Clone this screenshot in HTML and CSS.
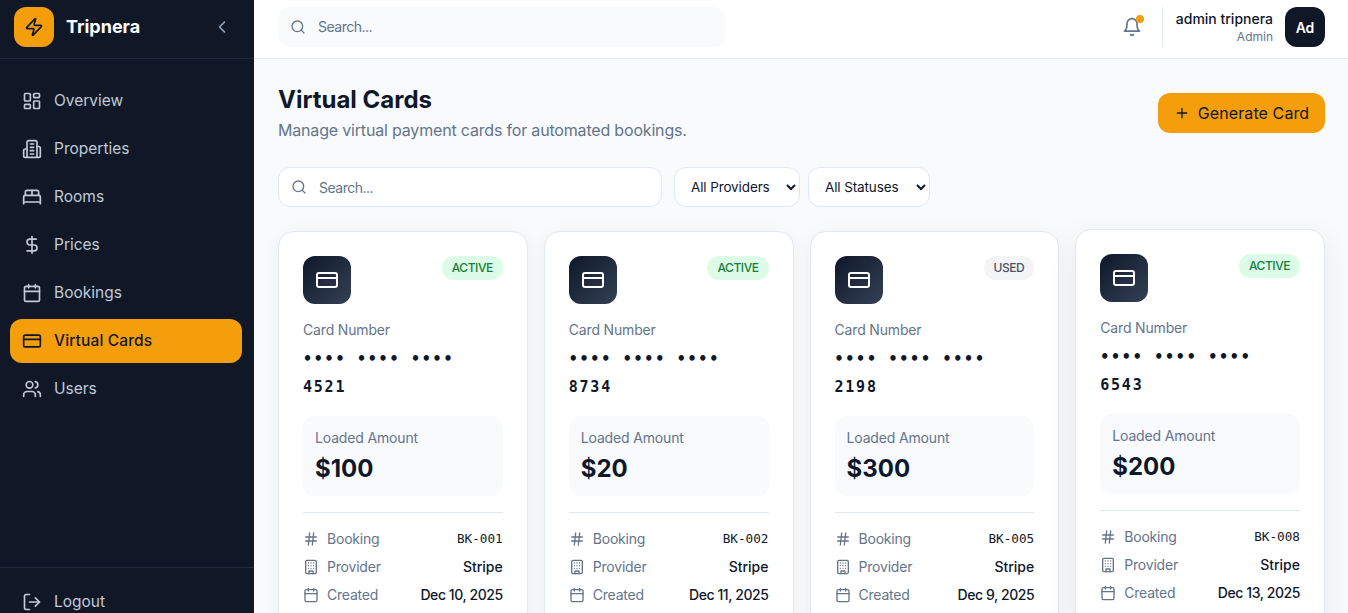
FILE: index.html
```html
<!DOCTYPE html>
<html lang="en">
<head>
<meta charset="utf-8">
<title>Virtual Cards</title>
<link rel="stylesheet" href="styles.css">
</head>
<body>
<svg class="sprite" aria-hidden="true">
  <defs>
    <symbol id="i-zap" viewBox="0 0 24 24"><path d="M4 14a1 1 0 0 1-.78-1.63l9.9-10.2a.5.5 0 0 1 .86.46l-1.92 6.02A1 1 0 0 0 13 10h7a1 1 0 0 1 .78 1.63l-9.9 10.2a.5.5 0 0 1-.86-.46l1.92-6.02A1 1 0 0 0 11 14z"/></symbol>
    <symbol id="i-left" viewBox="0 0 24 24"><path d="m15 18-6-6 6-6"/></symbol>
    <symbol id="i-dash" viewBox="0 0 24 24"><rect x="3" y="3" width="7" height="9" rx="1"/><rect x="14" y="3" width="7" height="5" rx="1"/><rect x="14" y="12" width="7" height="9" rx="1"/><rect x="3" y="16" width="7" height="5" rx="1"/></symbol>
    <symbol id="i-b2" viewBox="0 0 24 24"><path d="M6 22V4a2 2 0 0 1 2-2h8a2 2 0 0 1 2 2v18Z"/><path d="M6 12H4a2 2 0 0 0-2 2v6a2 2 0 0 0 2 2h2"/><path d="M18 9h2a2 2 0 0 1 2 2v9a2 2 0 0 1-2 2h-2"/><path d="M10 6h4M10 10h4M10 14h4M10 18h4"/></symbol>
    <symbol id="i-bed" viewBox="0 0 24 24"><path d="M2 20v-8a2 2 0 0 1 2-2h16a2 2 0 0 1 2 2v8"/><path d="M4 10V6a2 2 0 0 1 2-2h12a2 2 0 0 1 2 2v4"/><path d="M12 4v6"/><path d="M2 18h20"/></symbol>
    <symbol id="i-dollar" viewBox="0 0 24 24"><path d="M12 2v20"/><path d="M17 5H9.5a3.5 3.5 0 0 0 0 7h5a3.5 3.5 0 0 1 0 7H6"/></symbol>
    <symbol id="i-cal" viewBox="0 0 24 24"><path d="M8 2v4M16 2v4"/><rect x="3" y="4" width="18" height="18" rx="2"/><path d="M3 10h18"/></symbol>
    <symbol id="i-card" viewBox="0 0 24 24"><rect x="2" y="5" width="20" height="14" rx="2"/><path d="M2 10h20"/></symbol>
    <symbol id="i-users" viewBox="0 0 24 24"><path d="M16 21v-2a4 4 0 0 0-4-4H6a4 4 0 0 0-4 4v2"/><circle cx="9" cy="7" r="4"/><path d="M22 21v-2a4 4 0 0 0-3-3.87"/><path d="M16 3.13a4 4 0 0 1 0 7.75"/></symbol>
    <symbol id="i-logout" viewBox="0 0 24 24"><path d="M9 21H5a2 2 0 0 1-2-2V5a2 2 0 0 1 2-2h4"/><path d="m16 17 5-5-5-5"/><path d="M21 12H9"/></symbol>
    <symbol id="i-search" viewBox="0 0 24 24"><circle cx="11" cy="11" r="8"/><path d="m21 21-4.3-4.3"/></symbol>
    <symbol id="i-bell" viewBox="0 0 24 24"><path d="M6 8a6 6 0 0 1 12 0c0 7 3 9 3 9H3s3-2 3-9"/><path d="M10.3 21a1.94 1.94 0 0 0 3.4 0"/></symbol>
    <symbol id="i-plus" viewBox="0 0 24 24"><path d="M5 12h14M12 5v14"/></symbol>
    <symbol id="i-hash" viewBox="0 0 24 24"><path d="M4 9h16M4 15h16M10 3 8 21M16 3l-2 18"/></symbol>
    <symbol id="i-building" viewBox="0 0 24 24"><rect x="4" y="2" width="16" height="20" rx="2"/><path d="M9 22v-4h6v4"/><path d="M8 6h.01M16 6h.01M12 6h.01M12 10h.01M12 14h.01M16 10h.01M16 14h.01M8 10h.01M8 14h.01"/></symbol>
  </defs>
</svg>
<div class="app">
  <aside class="sidebar">
    <div class="brand">
      <span class="logo"><svg class="icon i20"><use href="#i-zap"/></svg></span>
      <span class="brand-name">Tripnera</span>
      <svg class="icon i20 collapse"><use href="#i-left"/></svg>
    </div>
    <nav class="nav">
      <a class="nav-item"><svg class="icon i20"><use href="#i-dash"/></svg>Overview</a>
      <a class="nav-item"><svg class="icon i20"><use href="#i-b2"/></svg>Properties</a>
      <a class="nav-item"><svg class="icon i20"><use href="#i-bed"/></svg>Rooms</a>
      <a class="nav-item"><svg class="icon i20"><use href="#i-dollar"/></svg>Prices</a>
      <a class="nav-item"><svg class="icon i20"><use href="#i-cal"/></svg>Bookings</a>
      <a class="nav-item active"><svg class="icon i20"><use href="#i-card"/></svg>Virtual Cards</a>
      <a class="nav-item"><svg class="icon i20"><use href="#i-users"/></svg>Users</a>
    </nav>
    <div class="side-foot">
      <a class="nav-item"><svg class="icon i20"><use href="#i-logout"/></svg>Logout</a>
    </div>
  </aside>
  <div class="main">
    <header class="topbar">
      <div class="top-search"><svg class="icon i16"><use href="#i-search"/></svg><span>Search...</span></div>
      <div class="top-right">
        <span class="bell"><svg class="icon i20"><use href="#i-bell"/></svg><span class="bell-dot"></span></span>
        <span class="top-divider"></span>
        <div class="user"><div class="user-name">admin tripnera</div><div class="user-role">Admin</div></div>
        <span class="avatar">Ad</span>
      </div>
    </header>
    <main class="content">
      <div class="page-head">
        <div>
          <h1 class="title">Virtual Cards</h1>
          <p class="subtitle">Manage virtual payment cards for automated bookings.</p>
        </div>
        <button class="primary"><svg class="icon i16"><use href="#i-plus"/></svg>Generate Card</button>
      </div>
      <div class="filters">
        <div class="filter-search"><svg class="icon i16"><use href="#i-search"/></svg><span>Search...</span></div>
        <select class="select providers"><option>All Providers</option></select>
        <select class="select statuses"><option>All Statuses</option></select>
      </div>
      <div class="grid">
        <article class="card">
          <div class="card-top"><span class="card-icon"><svg class="icon i24"><use href="#i-card"/></svg></span><span class="badge active-b">ACTIVE</span></div>
          <div class="label">Card Number</div>
          <div class="number">•••• •••• •••• 4521</div>
          <div class="amount"><div class="label">Loaded Amount</div><div class="value">$100</div></div>
          <div class="rows">
            <div class="row"><span class="key"><svg class="icon i16"><use href="#i-hash"/></svg>Booking</span><span class="code">BK-001</span></div>
            <div class="row"><span class="key"><svg class="icon i16"><use href="#i-building"/></svg>Provider</span><span class="val">Stripe</span></div>
            <div class="row"><span class="key"><svg class="icon i16"><use href="#i-cal"/></svg>Created</span><span class="val date">Dec 10, 2025</span></div>
          </div>
        </article>
        <article class="card">
          <div class="card-top"><span class="card-icon"><svg class="icon i24"><use href="#i-card"/></svg></span><span class="badge active-b">ACTIVE</span></div>
          <div class="label">Card Number</div>
          <div class="number">•••• •••• •••• 8734</div>
          <div class="amount"><div class="label">Loaded Amount</div><div class="value">$20</div></div>
          <div class="rows">
            <div class="row"><span class="key"><svg class="icon i16"><use href="#i-hash"/></svg>Booking</span><span class="code">BK-002</span></div>
            <div class="row"><span class="key"><svg class="icon i16"><use href="#i-building"/></svg>Provider</span><span class="val">Stripe</span></div>
            <div class="row"><span class="key"><svg class="icon i16"><use href="#i-cal"/></svg>Created</span><span class="val date">Dec 11, 2025</span></div>
          </div>
        </article>
        <article class="card">
          <div class="card-top"><span class="card-icon"><svg class="icon i24"><use href="#i-card"/></svg></span><span class="badge used-b">USED</span></div>
          <div class="label">Card Number</div>
          <div class="number">•••• •••• •••• 2198</div>
          <div class="amount"><div class="label">Loaded Amount</div><div class="value">$300</div></div>
          <div class="rows">
            <div class="row"><span class="key"><svg class="icon i16"><use href="#i-hash"/></svg>Booking</span><span class="code">BK-005</span></div>
            <div class="row"><span class="key"><svg class="icon i16"><use href="#i-building"/></svg>Provider</span><span class="val">Stripe</span></div>
            <div class="row"><span class="key"><svg class="icon i16"><use href="#i-cal"/></svg>Created</span><span class="val date">Dec 9, 2025</span></div>
          </div>
        </article>
        <article class="card lifted">
          <div class="card-top"><span class="card-icon"><svg class="icon i24"><use href="#i-card"/></svg></span><span class="badge active-b">ACTIVE</span></div>
          <div class="label">Card Number</div>
          <div class="number">•••• •••• •••• 6543</div>
          <div class="amount"><div class="label">Loaded Amount</div><div class="value">$200</div></div>
          <div class="rows">
            <div class="row"><span class="key"><svg class="icon i16"><use href="#i-hash"/></svg>Booking</span><span class="code">BK-008</span></div>
            <div class="row"><span class="key"><svg class="icon i16"><use href="#i-building"/></svg>Provider</span><span class="val">Stripe</span></div>
            <div class="row"><span class="key"><svg class="icon i16"><use href="#i-cal"/></svg>Created</span><span class="val date">Dec 13, 2025</span></div>
          </div>
        </article>
      </div>
    </main>
  </div>
</div>
</body>
</html>
```
FILE: styles.css
```css
* { box-sizing: border-box; }
html, body { margin: 0; height: 100%; overflow: hidden; }
body { font-family: Inter, "Noto Sans", sans-serif; font-size: 14px; color: #0f172a; background: #f8fafc; }
.sprite { display: none; }
.icon { fill: none; stroke: currentColor; stroke-width: 2; stroke-linecap: round; stroke-linejoin: round; flex: none; display: block; }
.i16 { width: 16px; height: 16px; }
.i20 { width: 20px; height: 20px; }
.i24 { width: 24px; height: 24px; }

.app { display: flex; height: 100vh; overflow: hidden; }
.sidebar { width: 254px; flex: none; background: #101828; color: #c0cad8; display: flex; flex-direction: column; overflow: hidden; }
.brand { height: 59px; flex: none; display: flex; align-items: center; padding: 0 22px 5px 14px; border-bottom: 1px solid #1e293b; gap: 12px; }
.logo { width: 40px; height: 40px; border-radius: 12px; background: #f59e0b; color: #0f172a; display: flex; align-items: center; justify-content: center; }
.brand-name { flex: 1; font-size: 18px; font-weight: 700; color: #fff; }
.collapse { color: #94a3b8; }
.nav { height: 508px; flex: none; padding: 20px 12px 0 10px; display: flex; flex-direction: column; gap: 4px; }
.nav-item { height: 44px; flex: none; display: flex; align-items: center; gap: 12px; padding: 0 12px 1px; border-radius: 12px; font-size: 15.5px; color: #c0cad8; }
.nav-item .icon { margin-top: 1px; }
.nav-item.active { background: #f59e0b; color: #0f172a; font-weight: 500; letter-spacing: .15px; }
.side-foot { border-top: 1px solid #1e293b; padding: 12px 12px 0 10px; }

.main { flex: 1; min-width: 0; display: flex; flex-direction: column; overflow: hidden; }
.topbar { height: 59px; flex: none; background: #fff; border-bottom: 1px solid #e2e8f0; display: flex; align-items: center; justify-content: space-between; padding: 0 23px 4px 24px; }
.top-search { width: 448px; height: 40px; border-radius: 12px; background: #f8fafc; display: flex; align-items: center; gap: 12px; padding: 0 12px; color: #64748b; font-size: 14px; letter-spacing: -.5px; }
.top-search span { padding-bottom: 1px; }
.top-right { display: flex; align-items: center; }
.bell { position: relative; color: #64748b; margin-right: 20px; }
.bell-dot { position: absolute; top: -2px; right: -2px; width: 8px; height: 8px; border-radius: 50%; background: #f59e0b; }
.top-divider { width: 1px; height: 40px; background: #e2e8f0; margin-right: 13px; }
.user { text-align: right; margin-right: 12px; }
.user-name { font-size: 14px; font-weight: 500; line-height: 20px; }
.user-role { font-size: 12px; line-height: 16px; color: #64748b; }
.avatar { width: 40px; height: 40px; border-radius: 12px; background: #101828; color: #fff; font-size: 14px; font-weight: 600; display: flex; align-items: center; justify-content: center; }

.content { flex: 1; padding: 24px 23px 0 24px; overflow: hidden; }
.page-head { display: flex; justify-content: space-between; align-items: center; margin-bottom: 24px; height: 60px; }
.title { margin: 1px 0 0; font-size: 24px; line-height: 32px; font-weight: 700; }
.subtitle { margin: 2px 0 1px; font-size: 16px; line-height: 24px; color: #64748b; letter-spacing: -.18px; }
.primary { height: 40px; width: 167px; border: 0; border-radius: 12px; background: #f59e0b; color: #0f172a; font: inherit; font-size: 16px; font-weight: 400; letter-spacing: .1px; display: flex; align-items: center; justify-content: center; gap: 8px; padding: 0; }
.filters { display: flex; align-items: center; margin-bottom: 24px; }
.filter-search { width: 384px; height: 40px; background: #fff; border: 1px solid #e2e8f0; border-radius: 12px; display: flex; align-items: center; gap: 12px; padding: 0 12px; color: #64748b; font-size: 14px; letter-spacing: -.5px; margin-right: 12px; }
.select { height: 40px; background: #fff; border: 1px solid #e2e8f0; border-radius: 12px; padding: 0 12px; font: inherit; font-size: 13.5px; letter-spacing: -.12px; color: #0f172a; }
.providers { width: 126px; margin-right: 8px; }
.statuses { width: 122px; }

.grid { display: grid; grid-template-columns: repeat(4, 1fr); gap: 16px; }
.card { background: #fff; border: 1px solid #e2e8f0; border-radius: 16px; padding: 24px; box-shadow: 0 4px 20px rgba(15, 23, 42, .05); }
.lifted { transform: translateY(-2px); box-shadow: 0 10px 30px rgba(15, 23, 42, .08); }
.card-top { display: flex; justify-content: space-between; align-items: flex-start; margin-bottom: 16px; }
.card-icon { width: 48px; height: 48px; border-radius: 12px; background: linear-gradient(135deg, #0f172a, #334155); color: #fff; display: flex; align-items: center; justify-content: center; }
.badge { height: 24px; padding: 0 10px; border-radius: 999px; font-size: 12px; font-weight: 450; line-height: 24px; letter-spacing: -.45px; }
.active-b { background: #dcfce7; color: #15803d; }
.used-b { background: #f3f4f6; color: #4b5563; }
.label { font-size: 14px; line-height: 20px; color: #64748b; letter-spacing: -.16px; }
.number { font-family: "DejaVu Sans Mono", monospace; font-weight: 700; font-size: 15px; line-height: 28px; letter-spacing: 1.77px; margin-top: 5px; margin-bottom: 15px; }
.amount { background: #f8fafc; border-radius: 12px; padding: 12px; height: 80px; margin-bottom: 16px; }
.value { font-size: 24px; line-height: 32px; font-weight: 700; margin-top: 5px; }
.rows { border-top: 1px solid #e2e8f0; padding-top: 12px; display: flex; flex-direction: column; }
.row { height: 28px; display: flex; align-items: center; justify-content: space-between; }
.key { display: flex; align-items: center; gap: 8px; color: #64748b; letter-spacing: -.2px; padding-bottom: 2px; }
.key .icon { margin-top: 2px; }
.val { font-weight: 450; padding-bottom: 2px; }
.date { letter-spacing: -.42px; }
.code { font-family: "DejaVu Sans Mono", monospace; font-size: 12.7px; font-weight: 400; padding-bottom: 2px; }
```
